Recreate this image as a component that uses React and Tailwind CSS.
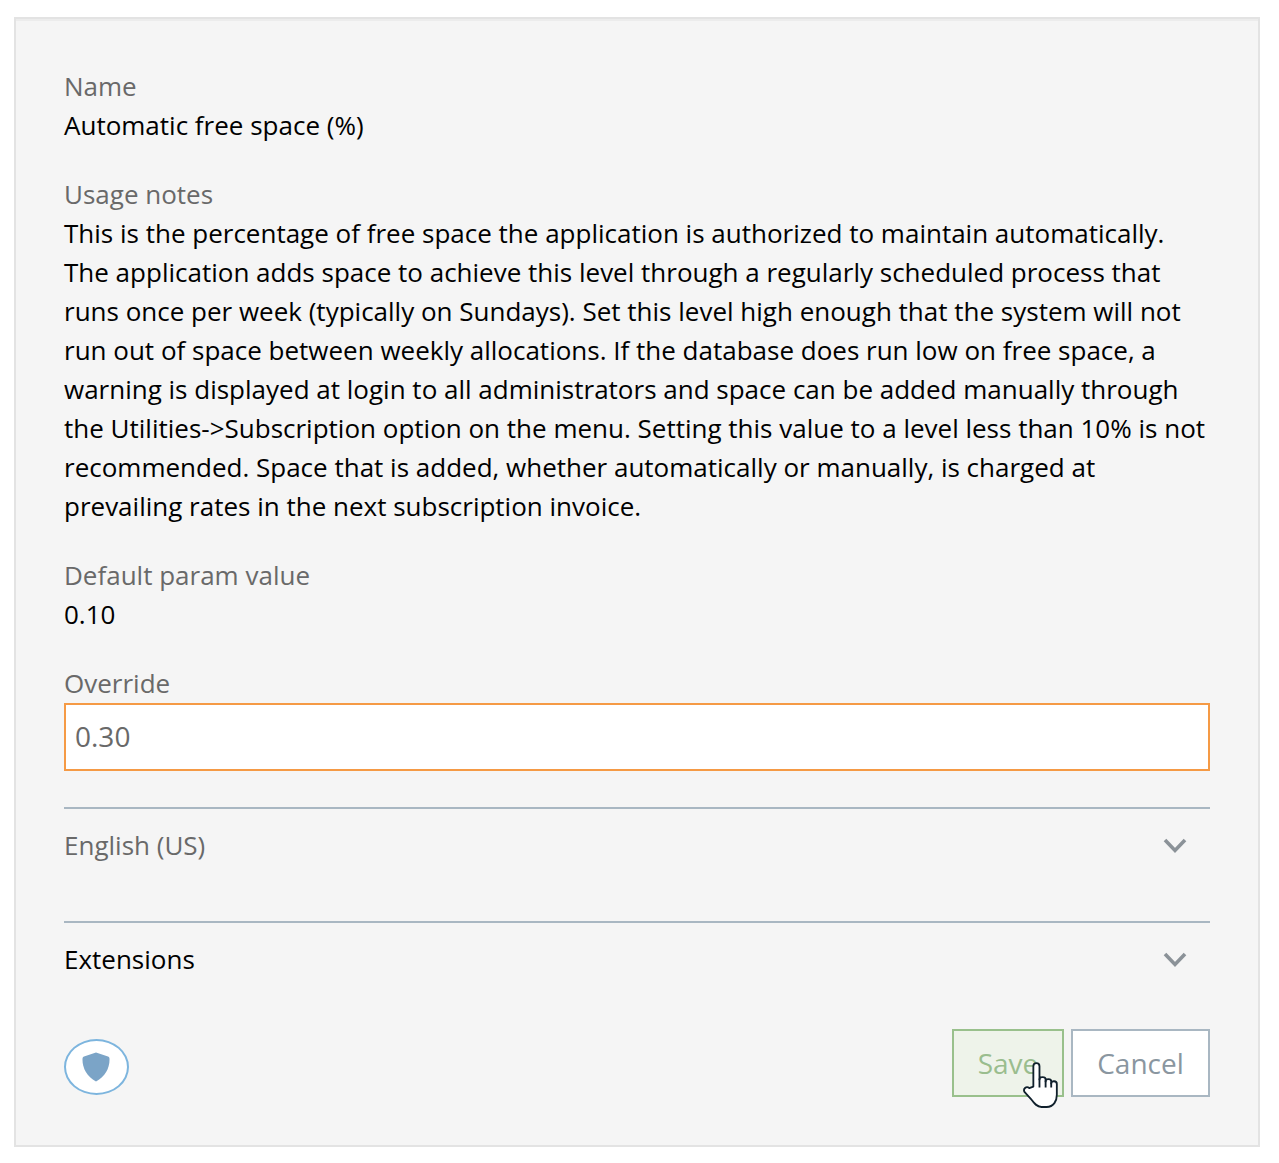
const NOTES =
  "This is the percentage of free space the application is authorized to maintain automatically. The application adds space to achieve this level through a regularly scheduled process that runs once per week (typically on Sundays). Set this level high enough that the system will not run out of space between weekly allocations. If the database does run low on free space, a warning is displayed at login to all administrators and space can be added manually through the Utilities->Subscription option on the menu. Setting this value to a level less than 10% is not recommended. Space that is added, whether automatically or manually, is charged at prevailing rates in the next subscription invoice.";

const Field = ({ label, children }) => (
  <div className="mb-[30px]">
    <div className="text-[#696969]">{label}</div>
    <div className="text-black">{children}</div>
  </div>
);

const Section = ({ label, muted }) => (
  <div className="border-t-2 border-[#a9b7c2] h-[114px] pt-[17px] flex justify-between pr-[23px]">
    <span className={muted ? "text-[#696969]" : "text-black"}>{label}</span>
    <svg viewBox="0 0 24 16" className="w-[24px] h-[16px] mt-[12px]">
      <path d="M2 2 L12 12.500 L22 2" fill="none" stroke="#8b9298" strokeWidth="3.600" />
    </svg>
  </div>
);

const HandCursor = () => (
  <svg
    viewBox="0 0 36 48"
    className="absolute left-[68px] top-[29px] w-[37px] h-[49px]"
  >
    <path
      d="M11 26 L11 6 C11 2 17 2 17 6 L17 19 C17 16 23 16 23 19 L23 21 C23 18 28.500 18 28.500 21 L28.500 23 C28.500 20 34 20 34 23.500 L34 34 C34 40 31 46 24 46 L19 46 C14 46 11.500 42 8.500 38 L2.500 31.500 C0.500 28.500 4 25 7 27.500 Z"
      fill="#ffffff"
      stroke="#10202c"
      strokeWidth="1.800"
      strokeLinejoin="round"
    />
    <path d="M17 18 V27 M23 20 V27 M28.500 22 V27" stroke="#10202c" strokeWidth="1.800" fill="none" />
  </svg>
);

export default function App() {
  return (
    <div className="w-[1279px] h-[1163px] bg-white pt-[17px] pl-[14px] font-['Open_Sans',sans-serif] text-[26px] leading-[39px]">
      <div className="w-[1246px] h-[1130px] bg-[#f5f5f5] border-2 border-[#e3e3e3] shadow-[inset_0_2px_0_#ececec] pt-[48px] px-[48px]">
        <Field label="Name">Automatic free space (%)</Field>
        <Field label="Usage notes">{NOTES}</Field>
        <Field label="Default param value">0.10</Field>

        <div className="text-[#696969]">Override</div>
        <input
          readOnly
          value="0.30"
          className="block w-full h-[68px] mb-[36px] bg-white border-2 border-[#f59a45] pl-[9px] pr-[9px] pb-[2px] text-[28px] text-[#696969] outline-none"
        />

        <Section label="English (US)" muted />
        <Section label="Extensions" />

        <div className="flex justify-between items-start -mt-[6px]">
          <button className="mt-[10px] w-[65px] h-[56px] rounded-[50%] bg-white border-2 border-[#7db5de] flex items-center justify-center">
            <svg viewBox="0 0 28 30" className="w-[28px] h-[30px] -ml-[2px]">
              <path
                d="M14 0.500 L26 4.500 C27.500 5 27.500 6 27.500 8 C27.500 16 23 25 14 29.500 C5 25 0.500 16 0.500 8 C0.500 6 0.500 5 2 4.500 Z"
                fill="#7ba4c7"
              />
            </svg>
          </button>
          <div className="flex gap-[7px] text-[28px]">
            <button className="relative w-[112px] h-[68px] border-2 border-[#99c08c] bg-[#eef3ea] text-[#9abd8e]">
              Save
              <HandCursor />
            </button>
            <button className="w-[139px] h-[68px] border-2 border-[#a9b7c2] bg-white text-[#8a96a0]">
              Cancel
            </button>
          </div>
        </div>
      </div>
    </div>
  );
}
